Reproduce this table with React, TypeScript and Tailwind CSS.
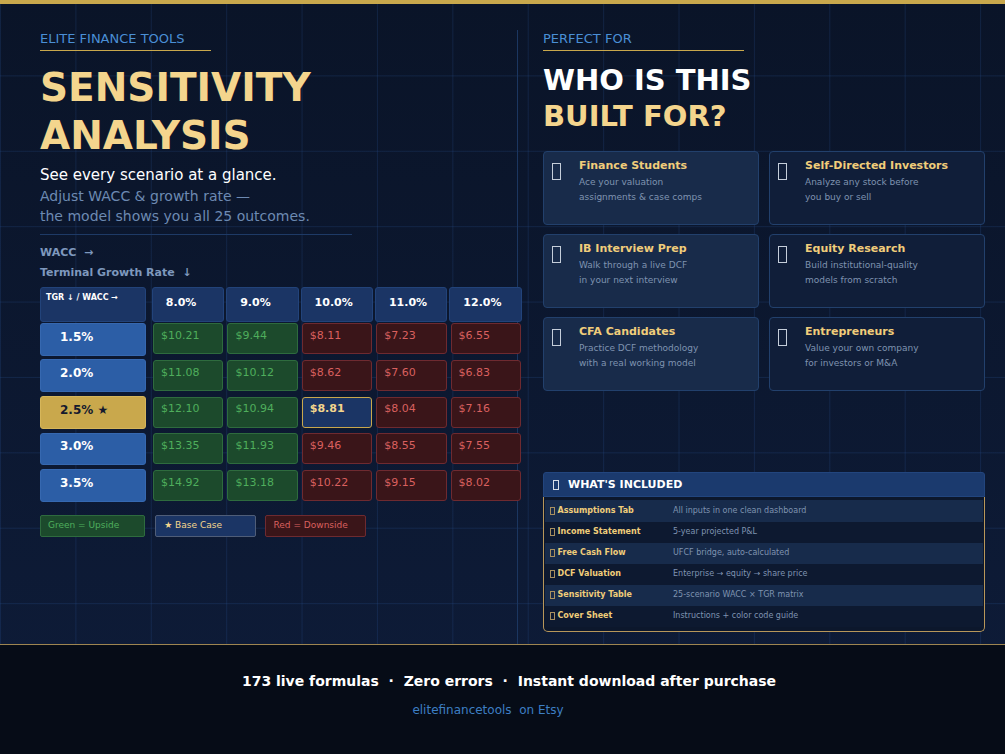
import React from "react";

type Kind = "up" | "down" | "base";

const wacc = ["8.0%", "9.0%", "10.0%", "11.0%", "12.0%"];

const rows: { tgr: string; base?: boolean; vals: string[] }[] = [
  { tgr: "1.5%", vals: ["$10.21", "$9.44", "$8.11", "$7.23", "$6.55"] },
  { tgr: "2.0%", vals: ["$11.08", "$10.12", "$8.62", "$7.60", "$6.83"] },
  { tgr: "2.5% ★", base: true, vals: ["$12.10", "$10.94", "$8.81", "$8.04", "$7.16"] },
  { tgr: "3.0%", vals: ["$13.35", "$11.93", "$9.46", "$8.55", "$7.55"] },
  { tgr: "3.5%", vals: ["$14.92", "$13.18", "$10.22", "$9.15", "$8.02"] },
];

const audiences = [
  { title: "Finance Students", lines: ["Ace your valuation", "assignments & case comps"] },
  { title: "Self-Directed Investors", lines: ["Analyze any stock before", "you buy or sell"] },
  { title: "IB Interview Prep", lines: ["Walk through a live DCF", "in your next interview"] },
  { title: "Equity Research", lines: ["Build institutional-quality", "models from scratch"] },
  { title: "CFA Candidates", lines: ["Practice DCF methodology", "with a real working model"] },
  { title: "Entrepreneurs", lines: ["Value your own company", "for investors or M&A"] },
];

const included = [
  ["Assumptions Tab", "All inputs in one clean dashboard"],
  ["Income Statement", "5-year projected P&L"],
  ["Free Cash Flow", "UFCF bridge, auto-calculated"],
  ["DCF Valuation", "Enterprise → equity → share price"],
  ["Sensitivity Table", "25-scenario WACC × TGR matrix"],
  ["Cover Sheet", "Instructions + color code guide"],
];

const cellStyles: Record<Kind, string> = {
  up: "bg-[#1c4a2c] border-[#2e6b3e] text-[#4fae5c]",
  down: "bg-[#3a1519] border-[#6e2a30] text-[#d9605f]",
  base: "bg-[#1b3565] border-[#c9a84c] text-[#f4d58d] font-bold",
};

// missing-glyph box, the emoji icons in the source render as tofu
function Tofu({ className }: { className: string }) {
  return <span className={`inline-block shrink-0 ${className}`} />;
}

function SensitivityTable() {
  return (
    <div className="mt-[4px] w-[523px]">
      {/* header row */}
      <div className="grid grid-cols-[111px_repeat(5,74.4px)] h-[35.8px]">
        <div className="w-[106px] h-[34.8px] rounded-[3px] bg-[#1b3565] border border-[#22437a] pl-[5px] pt-[5px] text-[8px] leading-[10px] font-bold text-white">
          TGR ↓ / WACC →
        </div>
        {wacc.map((w) => (
          <div key={w} className="pl-[0.8px]">
            <div className="w-[72.4px] h-[34.8px] rounded-[3px] bg-[#1b3565] border border-[#22437a] flex items-center pl-[13px] pb-[3px] text-[11px] font-bold text-white">
              {w}
            </div>
          </div>
        ))}
      </div>

      {rows.map((r) => (
        <div key={r.tgr} className="grid grid-cols-[111px_repeat(5,74.4px)] h-[36.6px]">
          <div
            className={`w-[106px] h-[32.8px] rounded-[3px] flex items-center pl-[19px] pb-[5px] text-[12px] font-bold ${
              r.base
                ? "bg-[#c9a84c] border border-[#d6b65a] text-[#141a2e]"
                : "bg-[#2c5ea6] border border-[#3668b0] text-white"
            }`}
          >
            {r.tgr}
          </div>
          {r.vals.map((v, i) => {
            const kind: Kind = r.base && i === 2 ? "base" : i < 2 ? "up" : "down";
            return (
              <div key={i} className="pl-[2px] pt-[0.7px]">
                <div
                  className={`w-[70.4px] h-[31px] rounded-[3px] border flex items-center pl-[7px] pb-[5px] text-[11px] ${cellStyles[kind]}`}
                >
                  {v}
                </div>
              </div>
            );
          })}
        </div>
      ))}

      {/* legend */}
      <div className="mt-[9px] flex gap-[9.8px] text-[9px]">
        <div className="w-[105.4px] h-[22.6px] rounded-[2px] border border-[#2e6b3e] bg-[#1c4a2c] text-[#4fae5c] flex items-center pl-[7px] pb-[1px]">
          Green = Upside
        </div>
        <div className="w-[100.5px] h-[22.6px] rounded-[2px] border border-[#4f5d78] bg-[#1b3565] text-[#f4d58d] flex items-center pl-[8px] pb-[1px]">
          ★ Base Case
        </div>
        <div className="w-[100.5px] h-[22.6px] rounded-[2px] border border-[#6e2a30] bg-[#3a1519] text-[#d9605f] flex items-center pl-[7px] pb-[1px]">
          Red = Downside
        </div>
      </div>
    </div>
  );
}

export default function App() {
  return (
    <div className="relative w-[1005px] h-[754px] overflow-hidden font-['DejaVu_Sans',sans-serif] bg-[linear-gradient(to_right,rgba(44,88,158,0.22)_1px,transparent_1px),linear-gradient(to_bottom,rgba(44,88,158,0.22)_1px,transparent_1px),linear-gradient(to_bottom,#0a1428,#0e1c39)] bg-[size:75.4px_75.4px,75.4px_75.4px,100%_100%]">
      <div className="h-[4px] bg-[#c9a84c]" />

      <div className="flex h-[640px]">
        {/* left: sensitivity */}
        <div className="w-[518px] shrink-0 mt-[26px] pl-[40px] border-r border-[#1b3660]">
          <div className="w-[171px] border-b border-[#c9a84c] pb-[3px] text-[13px] leading-[17px] text-[#4a8fd6]">
            ELITE FINANCE TOOLS
          </div>
          <h1 className="mt-[13px] text-[39px] leading-[48px] font-bold text-[#f4d58d]">
            SENSITIVITY
            <br />
            ANALYSIS
          </h1>
          <p className="mt-[5px] text-[15px] leading-[21px] text-white">See every scenario at a glance.</p>
          <p className="text-[14px] leading-[20px] text-[#6d8ab2]">
            Adjust WACC &amp; growth rate —
            <br />
            the model shows you all 25 outcomes.
          </p>
          <div className="mt-[8px] w-[312px] border-t border-[#1e3a66]" />
          <div className="mt-[8px] text-[11px] leading-[20px] font-bold text-[#7e98bd] whitespace-pre">
            <div>WACC  →</div>
            <div>Terminal Growth Rate  ↓</div>
          </div>
          <SensitivityTable />
        </div>

        {/* right: audience */}
        <div className="flex-1 mt-[26px] pl-[25px] pr-[20px]">
          <div className="w-[201px] border-b border-[#c9a84c] pb-[3px] text-[13px] leading-[17px] text-[#4a8fd6]">
            PERFECT FOR
          </div>
          <h2 className="mt-[10.5px] text-[29px] leading-[36px] font-bold">
            <span className="text-white">WHO IS THIS</span>
            <br />
            <span className="text-[#f4d58d]">BUILT FOR?</span>
          </h2>

          <div className="mt-[17.4px] grid grid-cols-2 gap-x-[10px] gap-y-[9.3px]">
            {audiences.map((a, i) => (
              <div
                key={a.title}
                className={`h-[74px] rounded-[4px] border border-[#22406c] flex pl-[8px] pt-[7px] ${
                  i % 2 === 0 ? "bg-[#182b4a]" : "bg-[#101e39]"
                }`}
              >
                <Tofu className="mt-[3.7px] w-[9px] h-[17px] border-[1.5px] border-[#c5ceda]" />
                <div className="ml-[18px]">
                  <div className="text-[11px] leading-[14px] font-bold text-[#f0cd7a]">{a.title}</div>
                  <div className="mt-[2px] text-[9px] leading-[15px] text-[#7f93b0]">
                    {a.lines.map((l) => (
                      <div key={l}>{l}</div>
                    ))}
                  </div>
                </div>
              </div>
            ))}
          </div>

          {/* what's included */}
          <div className="mt-[81px]">
            <div className="h-[25px] rounded-t-[3px] bg-[#1b3a6e] border border-[#22457e] flex items-center pl-[9px]">
              <Tofu className="w-[6px] h-[10px] border border-[#d8dee8]" />
              <span className="ml-[9px] text-[11px] font-bold text-white">WHAT'S INCLUDED</span>
            </div>
            <div className="border-x border-b border-[#b8975a] rounded-b-[5px] bg-[#0c172c] px-px pt-[3px] pb-[4px]">
              {included.map(([label, desc], i) => (
                <div
                  key={label}
                  className={`h-[21.1px] flex items-center pb-[1px] ${i % 2 === 0 ? "bg-[#172b4b]" : "bg-[#0d1930]"}`}
                >
                  <div className="w-[128px] flex items-center pl-[5px]">
                    <Tofu className="w-[4.5px] h-[8px] border border-[#a89060]" />
                    <span className="ml-[3px] text-[8px] font-bold text-[#f0cd7a]">{label}</span>
                  </div>
                  <span className="text-[8px] text-[#7f93b0]">{desc}</span>
                </div>
              ))}
            </div>
          </div>
        </div>
      </div>

      {/* footer */}
      <div className="h-[110px] border-t border-[#9e8550] bg-[#060c17] flex flex-col items-center pt-[28px]">
        <div className="pl-[13px] text-[14px] leading-[17px] font-bold text-white whitespace-pre">
          173 live formulas  ·  Zero errors  ·  Instant download after purchase
        </div>
        <div className="mt-[13px] pr-[29px] text-[12px] leading-[15px] text-[#3d7fc4] whitespace-pre">elitefinancetools  on Etsy</div>
      </div>
    </div>
  );
}
